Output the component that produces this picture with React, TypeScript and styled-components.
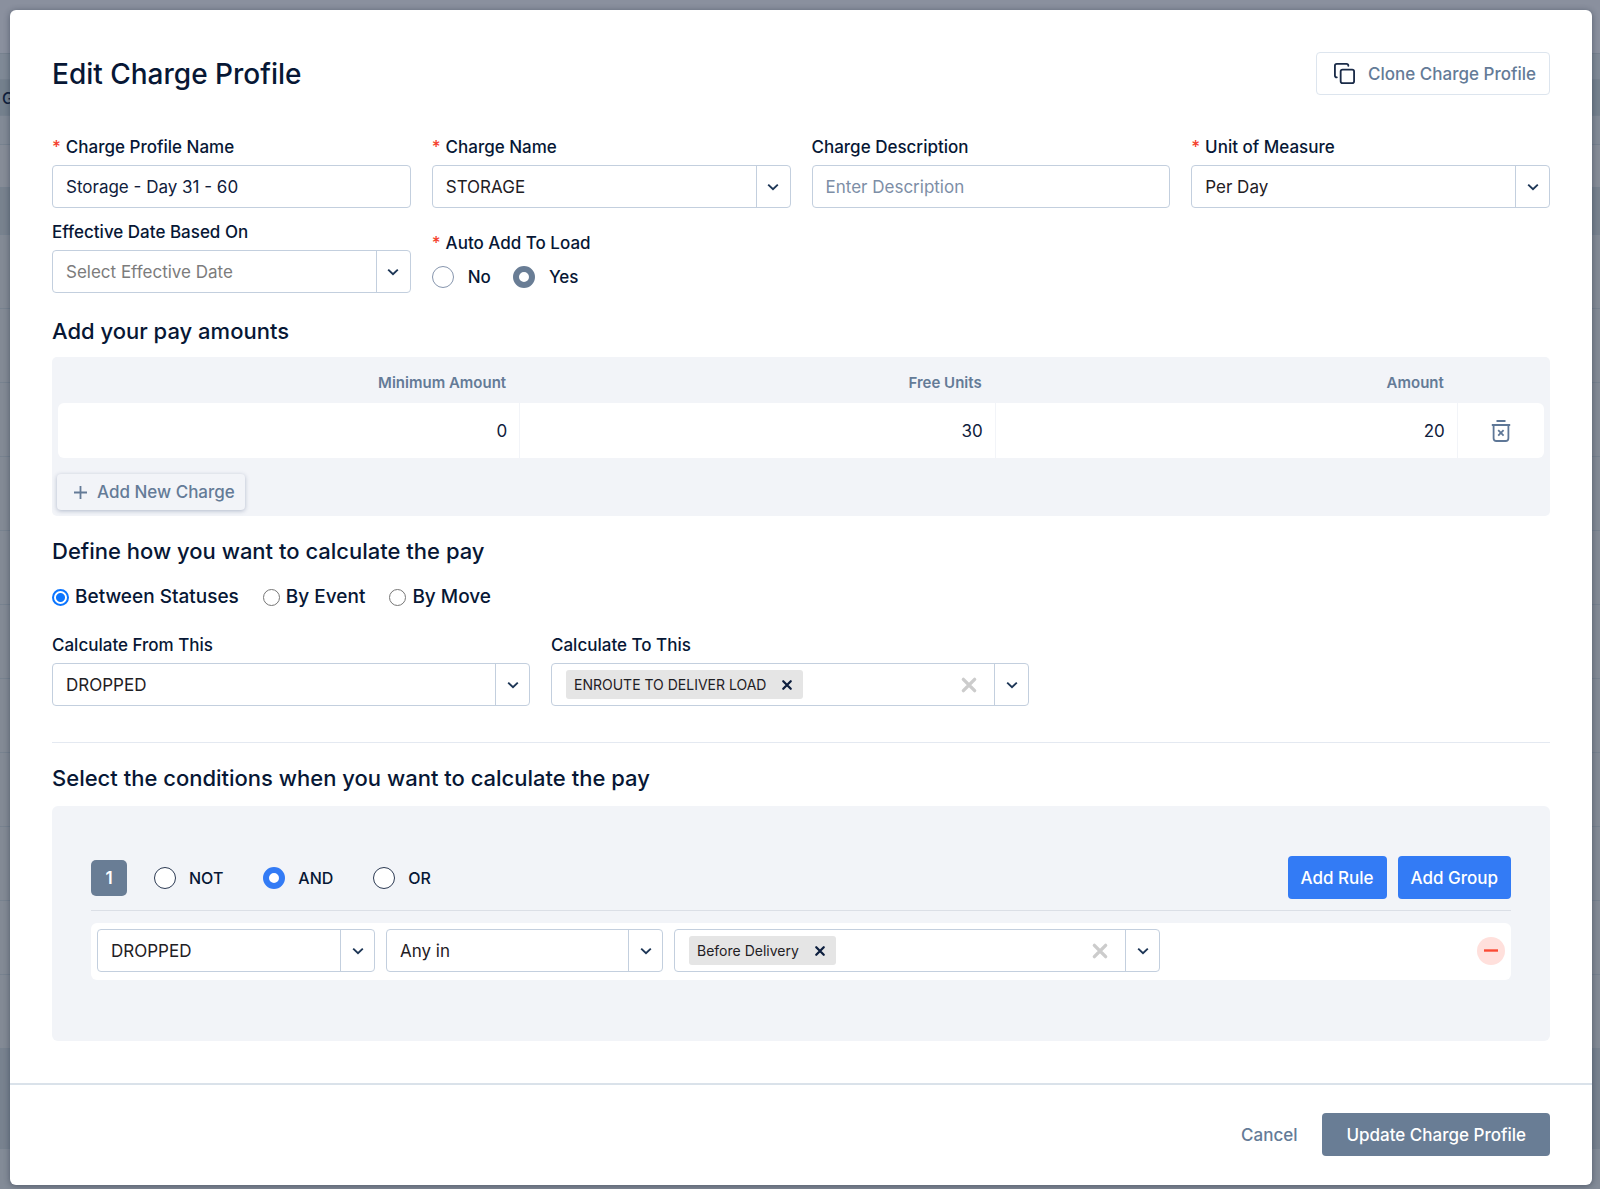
import React, { useId } from "react";
import styled, { createGlobalStyle, css } from "styled-components";
import { Copy } from "lucide-react";

const color = {
  ink: "#071735",
  text: "#10203c",
  value: "#1f2024",
  slate: "#697d95",
  slateText: "#647b97",
  border: "#c3cfde",
  borderSoft: "#dde5ee",
  panel: "#f2f4f8",
  blue: "#337bf5",
  red: "#f4422e",
};

const GlobalStyle = createGlobalStyle`
  *, *::before, *::after { box-sizing: border-box; }
  body {
    margin: 0;
    font-family: Inter, "Liberation Sans", sans-serif;
    font-size: 17px;
    line-height: 20px;
    color: ${color.text};
  }
  button, input, select { font: inherit; color: inherit; }
  button { cursor: pointer; }
`;

/* ---------- page behind the dialog ---------- */

const Screen = styled.div`
  display: grid;
  min-height: 100vh;
  background: #838b97;
`;

const Backdrop = styled.div`
  grid-area: 1 / 1;
  min-width: 0;
  max-height: 100vh;
  overflow: hidden;
`;

const Band = styled.div<{ $height: number; $tone: string }>`
  height: ${(p) => p.$height}px;
  background: ${(p) => p.$tone};
  border-bottom: 1px solid #77828f;
  display: flex;
  align-items: center;
  padding-left: 2px;
  font-size: 16px;
  font-weight: 500;
`;

/* ---------- dialog ---------- */

const Dialog = styled.main`
  grid-area: 1 / 1;
  z-index: 1;
  min-width: 0;
  margin: 10px 8px 4px 10px;
  display: flex;
  flex-direction: column;
  background: #fff;
  border-radius: 6px;
  box-shadow: 0 1px 6px rgba(20, 30, 50, 0.45);
`;

const Body = styled.div`
  flex: 1;
  padding: 42px 42px 41px;
`;

const Header = styled.header`
  display: flex;
  align-items: center;
  justify-content: space-between;
`;

const Title = styled.h1`
  margin: 0;
  font-size: 28px;
  line-height: 36px;
  font-weight: 500;
  color: ${color.ink};
`;

const SectionTitle = styled.h2`
  margin: 0;
  font-size: 22px;
  line-height: 28px;
  font-weight: 500;
  color: ${color.ink};
`;

const Button = styled.button<{ $kind: "outline" | "plain" | "slate" | "blue" | "raised" }>`
  display: inline-flex;
  align-items: center;
  justify-content: center;
  height: 43px;
  padding: 0 14px;
  border: 1px solid transparent;
  border-radius: 4px;
  background: transparent;
  color: ${color.slateText};
  font-weight: 500;
  white-space: nowrap;
  ${(p) =>
    p.$kind === "outline" &&
    css`
      gap: 12px;
      padding: 0 13px 0 16px;
      background: #fff;
      border-color: ${color.borderSoft};
    `}
  ${(p) =>
    p.$kind === "slate" &&
    css`
      padding: 0 23px;
      background: ${color.slate};
      color: #fff;
    `}
  ${(p) =>
    p.$kind === "blue" &&
    css`
      padding: 0 12px;
      background: ${color.blue};
      color: #fff;
    `}
  ${(p) =>
    p.$kind === "raised" &&
    css`
      gap: 9px;
      height: 36px;
      padding: 0 9px 0 15px;
      background: ${color.panel};
      box-shadow: 0 1px 4px rgba(60, 80, 120, 0.35);
    `}
`;

/* ---------- fields ---------- */

const FieldGrid = styled.div<{ $narrow?: boolean }>`
  display: grid;
  grid-template-columns: ${(p) => (p.$narrow ? "repeat(2, 478px)" : "repeat(4, minmax(0, 1fr))")};
  gap: 14px 21px;
`;

const TopFields = styled(FieldGrid)`
  margin: 42px 0 24px;
`;

const FieldBox = styled.div`
  display: flex;
  flex-direction: column;
  gap: 8px;
  min-width: 0;
`;

const labelText = css`
  font-weight: 500;
  color: ${color.ink};
`;

const Label = styled.label`
  ${labelText}
`;

const Star = styled.span`
  margin-right: 5px;
  color: ${color.red};
`;

const boxed = css`
  width: 100%;
  height: 43px;
  background: #fff;
  border: 1px solid ${color.border};
  border-radius: 4px;
`;

const TextInput = styled.input`
  ${boxed}
  padding: 0 13px;
  &::placeholder {
    color: #7d8ea6;
    opacity: 1;
  }
`;

const SelectFrame = styled.div`
  ${boxed}
  display: grid;
  min-width: 0;
`;

const NativeSelect = styled.select<{ $muted?: boolean }>`
  grid-area: 1 / 1;
  appearance: none;
  width: 100%;
  min-width: 0;
  padding: 0 48px 0 13px;
  border: 0;
  background: transparent;
  color: ${(p) => (p.$muted ? "#7c7c7c" : color.value)};
`;

const ArrowCell = styled.span`
  grid-area: 1 / 1;
  justify-self: end;
  display: flex;
  align-items: center;
  justify-content: center;
  width: 34px;
  border-left: 1px solid ${color.border};
  pointer-events: none;
`;

const MultiFrame = styled.div`
  ${boxed}
  display: flex;
  align-items: center;
  padding-left: 14px;
`;

const Tag = styled.span`
  display: inline-flex;
  align-items: center;
  gap: 15px;
  flex: none;
  height: 29px;
  padding: 0 10px 0 8px;
  border-radius: 3px;
  background: #e5e5e5;
  color: ${color.value};
  font-size: 14px;
`;

const IconButton = styled.button`
  display: inline-flex;
  align-items: center;
  justify-content: center;
  flex: none;
  padding: 0;
  border: 0;
  background: transparent;
  vertical-align: middle;
`;

const ClearButton = styled(IconButton)`
  width: 20px;
  margin-right: 15px;
`;

const ArrowButton = styled(IconButton)`
  align-self: stretch;
  width: 34px;
  border-left: 1px solid ${color.border};
`;

const SearchInput = styled.input`
  flex: 1;
  min-width: 0;
  border: 0;
  outline: 0;
  background: transparent;
`;

const ChoiceRow = styled.div<{ $gap: number }>`
  display: flex;
  flex-wrap: wrap;
  align-items: center;
  gap: ${(p) => p.$gap}px;
`;

const AutoAdd = styled.div`
  display: flex;
  flex-direction: column;
  gap: 12px;
  padding-top: 11px;
`;

const GroupLabel = styled.span`
  ${labelText}
`;

const MethodRow = styled(ChoiceRow)`
  margin: 20px 0 26px;
`;

const Choice = styled.label<{ $gap: number; $size?: number }>`
  display: inline-flex;
  align-items: center;
  gap: ${(p) => p.$gap}px;
  font-size: ${(p) => p.$size ?? 17}px;
  line-height: 24px;
  font-weight: 500;
  color: ${color.ink};
`;

const Radio = styled.input<{ $tone: string; $edge: string }>`
  appearance: none;
  flex: none;
  width: 22px;
  height: 22px;
  margin: 0;
  border: 1px solid ${(p) => p.$edge};
  border-radius: 50%;
  background: #fff;
  &:checked {
    border: 6px solid ${(p) => p.$tone};
  }
`;

const SmallRadio = styled.input`
  appearance: none;
  flex: none;
  width: 17px;
  height: 17px;
  margin: 0;
  border: 1px solid #767676;
  border-radius: 50%;
  background: #fff;
  &:checked {
    border: 2px solid #0b75ff;
    background: radial-gradient(circle, #0b75ff 4px, #fff 5px);
  }
`;

/* ---------- amounts ---------- */

const AmountsPanel = styled.div`
  margin: 12px 0 21px;
  padding: 0 6px 6px;
  border-radius: 5px;
  background: ${color.panel};
`;

const Table = styled.table`
  width: 100%;
  border-collapse: separate;
  border-spacing: 0;
  table-layout: fixed;
`;

const HeadCell = styled.th<{ $width: string }>`
  width: ${(p) => p.$width};
  height: 46px;
  padding: 6px 14px 0 0;
  text-align: right;
  font-size: 15px;
  font-weight: 600;
  color: ${color.slateText};
`;

const Cell = styled.td`
  height: 55px;
  padding: 0;
  background: #fff;
  border-right: 1px solid ${color.panel};
  &:first-child {
    border-radius: 6px 0 0 6px;
  }
  &:last-child {
    border-right: 0;
    border-radius: 0 6px 6px 0;
    text-align: center;
  }
`;

const AmountInput = styled.input`
  display: block;
  width: 100%;
  height: 55px;
  padding: 0 12px 0 0;
  border: 0;
  background: transparent;
  text-align: right;
`;

const PanelFooter = styled.div`
  padding-top: 16px;
  margin-left: -1px;
`;

/* ---------- conditions ---------- */

const Divider = styled.hr<{ $space: string; $tone: string }>`
  height: 1px;
  margin: ${(p) => p.$space};
  border: 0;
  background: ${(p) => p.$tone};
`;

const ConditionsPanel = styled.div`
  margin-top: 14px;
  padding: 50px 39px 61px;
  border-radius: 6px;
  background: ${color.panel};
`;

const RuleHead = styled.div`
  display: flex;
  align-items: center;
  gap: 27px;
`;

const Badge = styled.span`
  display: flex;
  align-items: center;
  justify-content: center;
  width: 36px;
  height: 36px;
  border-radius: 5px;
  background: ${color.slate};
  color: #fff;
  font-weight: 600;
`;

const Actions = styled.div`
  display: flex;
  gap: 11px;
  margin-left: auto;
`;

const RuleRow = styled.div`
  display: grid;
  grid-template-columns: 278px 277px 486px 1fr;
  align-items: center;
  gap: 11px;
  padding: 6px 6px 8px;
  border-radius: 6px;
  background: #fff;
`;

const RemoveRule = styled(IconButton)`
  justify-self: end;
  width: 28px;
  height: 28px;
  border-radius: 50%;
  background: #ffe0dc;
`;

const Footer = styled.footer`
  display: flex;
  align-items: center;
  justify-content: flex-end;
  gap: 10px;
  padding: 28px 42px 29px;
  border-top: 2px solid #dae2ea;
`;

/* ---------- icons ---------- */

const Chevron = () => (
  <svg width="14" height="10" viewBox="0 0 14 10" fill="none" aria-hidden="true">
    <path d="M2.2 2.6 7 7.2l4.8-4.6" stroke="#1d3656" strokeWidth="1.9" />
  </svg>
);

const Cross = ({ size, width, stroke }: { size: number; width: number; stroke: string }) => (
  <svg width={size} height={size} viewBox="0 0 16 16" fill="none" aria-hidden="true">
    <path d="m3 3 10 10M13 3 3 13" stroke={stroke} strokeWidth={width} strokeLinecap="round" />
  </svg>
);

const TrashIcon = () => (
  <svg width="24" height="26" viewBox="0 0 24 26" fill="none" stroke="#5e7797" strokeWidth="1.8" aria-hidden="true">
    <path d="M7.5 3h9M2.8 7h18.4M4.6 7v13.2c0 1.8 1 2.8 2.8 2.8h9.2c1.8 0 2.8-1 2.8-2.8V7" />
    <path d="m9.2 12.2 5.4 5.4M14.6 12.2l-5.4 5.4" />
  </svg>
);

const PlusIcon = () => (
  <svg width="15" height="15" viewBox="0 0 15 15" aria-hidden="true">
    <path d="M7.5 1v13M1 7.5h13" stroke="#647b97" strokeWidth="1.8" />
  </svg>
);

/* ---------- composed controls ---------- */

function Dropdown({ id, value, muted, label }: { id?: string; value: string; muted?: boolean; label?: string }) {
  return (
    <SelectFrame>
      <NativeSelect id={id} $muted={muted} aria-label={label} defaultValue={value}>
        <option>{value}</option>
      </NativeSelect>
      <ArrowCell>
        <Chevron />
      </ArrowCell>
    </SelectFrame>
  );
}

function MultiSelect({ id, tag, label }: { id?: string; tag: string; label?: string }) {
  return (
    <MultiFrame>
      <Tag>
        {tag}
        <IconButton type="button" aria-label={`Remove ${tag}`}>
          <Cross size={12} width={3} stroke="#0d1e3e" />
        </IconButton>
      </Tag>
      <SearchInput id={id} aria-label={label} />
      <ClearButton type="button" aria-label="Clear all">
        <Cross size={18} width={3} stroke="#cccccc" />
      </ClearButton>
      <ArrowButton type="button" aria-label="Show options">
        <Chevron />
      </ArrowButton>
    </MultiFrame>
  );
}

function Field({
  label,
  required,
  children,
}: {
  label: string;
  required?: boolean;
  children: (id: string) => React.ReactNode;
}) {
  const id = useId();
  return (
    <FieldBox>
      <Label htmlFor={id}>
        {required && <Star>*</Star>}
        {label}
      </Label>
      {children(id)}
    </FieldBox>
  );
}

const bands: { height: number; tone: string; text?: string }[] = [
  { height: 54, tone: "#8a909e" },
  { height: 26, tone: "#7f8996" },
  { height: 36, tone: "#74808d", text: "G" },
  { height: 29, tone: "#828a96" },
  { height: 43, tone: "#868c97" },
  { height: 47, tone: "#78828e" },
  ...Array.from({ length: 11 }, () => ({ height: 74, tone: "#838a95" })),
  { height: 100, tone: "#78828f" },
];

const amounts = [
  { name: "Minimum Amount", value: "0", width: "31.1%" },
  { name: "Free Units", value: "30", width: "32%" },
  { name: "Amount", value: "20", width: "31.1%" },
];

export default function App() {
  return (
    <Screen>
      <GlobalStyle />
      <Backdrop aria-hidden="true">
        {bands.map((b, i) => (
          <Band key={i} $height={b.height} $tone={b.tone}>
            {b.text}
          </Band>
        ))}
      </Backdrop>
      <Dialog role="dialog" aria-labelledby="dialog-title">
        <Body>
          <Header>
            <Title id="dialog-title">Edit Charge Profile</Title>
            <Button type="button" $kind="outline">
              <Copy size={23} strokeWidth={1.9} color="#1a2b48" aria-hidden="true" />
              Clone Charge Profile
            </Button>
          </Header>

          <TopFields>
            <Field label="Charge Profile Name" required>
              {(id) => <TextInput id={id} defaultValue="Storage - Day 31 - 60" />}
            </Field>
            <Field label="Charge Name" required>
              {(id) => <Dropdown id={id} value="STORAGE" />}
            </Field>
            <Field label="Charge Description">
              {(id) => <TextInput id={id} placeholder="Enter Description" />}
            </Field>
            <Field label="Unit of Measure" required>
              {(id) => <Dropdown id={id} value="Per Day" />}
            </Field>
            <Field label="Effective Date Based On">
              {(id) => <Dropdown id={id} value="Select Effective Date" muted />}
            </Field>
            <AutoAdd role="radiogroup" aria-labelledby="auto-add-label">
              <GroupLabel id="auto-add-label">
                <Star>*</Star>Auto Add To Load
              </GroupLabel>
              <ChoiceRow $gap={22}>
                <Choice $gap={14}>
                  <Radio type="radio" name="auto" $tone={color.slate} $edge="#8796ae" />
                  No
                </Choice>
                <Choice $gap={14}>
                  <Radio type="radio" name="auto" defaultChecked $tone={color.slate} $edge="#8796ae" />
                  Yes
                </Choice>
              </ChoiceRow>
            </AutoAdd>
          </TopFields>

          <SectionTitle>Add your pay amounts</SectionTitle>
          <AmountsPanel>
            <Table>
              <thead>
                <tr>
                  {amounts.map((a) => (
                    <HeadCell key={a.name} $width={a.width} scope="col">
                      {a.name}
                    </HeadCell>
                  ))}
                  <HeadCell $width="5.8%" aria-label="Actions" />
                </tr>
              </thead>
              <tbody>
                <tr>
                  {amounts.map((a) => (
                    <Cell key={a.name}>
                      <AmountInput aria-label={a.name} defaultValue={a.value} />
                    </Cell>
                  ))}
                  <Cell>
                    <IconButton type="button" aria-label="Delete charge">
                      <TrashIcon />
                    </IconButton>
                  </Cell>
                </tr>
              </tbody>
            </Table>
            <PanelFooter>
              <Button type="button" $kind="raised">
                <PlusIcon />
                Add New Charge
              </Button>
            </PanelFooter>
          </AmountsPanel>

          <SectionTitle>Define how you want to calculate the pay</SectionTitle>
          <MethodRow $gap={24} role="radiogroup" aria-label="Calculation method">
            <Choice $gap={6} $size={19}>
              <SmallRadio type="radio" name="method" defaultChecked />
              Between Statuses
            </Choice>
            <Choice $gap={6} $size={19}>
              <SmallRadio type="radio" name="method" />
              By Event
            </Choice>
            <Choice $gap={6} $size={19}>
              <SmallRadio type="radio" name="method" />
              By Move
            </Choice>
          </MethodRow>
          <FieldGrid $narrow>
            <Field label="Calculate From This">{(id) => <Dropdown id={id} value="DROPPED" />}</Field>
            <Field label="Calculate To This">
              {(id) => <MultiSelect id={id} tag="ENROUTE TO DELIVER LOAD" />}
            </Field>
          </FieldGrid>

          <Divider $space="36px 0 21px" $tone="#e4e9f1" />

          <SectionTitle>Select the conditions when you want to calculate the pay</SectionTitle>
          <ConditionsPanel>
            <RuleHead>
              <Badge>1</Badge>
              <ChoiceRow $gap={40} role="radiogroup" aria-label="Combine rules with">
                {["NOT", "AND", "OR"].map((op) => (
                  <Choice key={op} $gap={13} $size={16}>
                    <Radio
                      type="radio"
                      name="operator"
                      defaultChecked={op === "AND"}
                      $tone={color.blue}
                      $edge="#2c3a53"
                    />
                    {op}
                  </Choice>
                ))}
              </ChoiceRow>
              <Actions>
                <Button type="button" $kind="blue">
                  Add Rule
                </Button>
                <Button type="button" $kind="blue">
                  Add Group
                </Button>
              </Actions>
            </RuleHead>
            <Divider $space="11px 0 12px" $tone="#dbdfe6" />
            <RuleRow>
              <Dropdown label="Status" value="DROPPED" />
              <Dropdown label="Operator" value="Any in" />
              <MultiSelect label="Values" tag="Before Delivery" />
              <RemoveRule type="button" aria-label="Remove rule">
                <svg width="14" height="3" viewBox="0 0 14 3" aria-hidden="true">
                  <path d="M0 1.5h14" stroke="#fb4a34" strokeWidth="2.4" />
                </svg>
              </RemoveRule>
            </RuleRow>
          </ConditionsPanel>
        </Body>
        <Footer>
          <Button type="button" $kind="plain">
            Cancel
          </Button>
          <Button type="submit" $kind="slate">
            Update Charge Profile
          </Button>
        </Footer>
      </Dialog>
    </Screen>
  );
}
